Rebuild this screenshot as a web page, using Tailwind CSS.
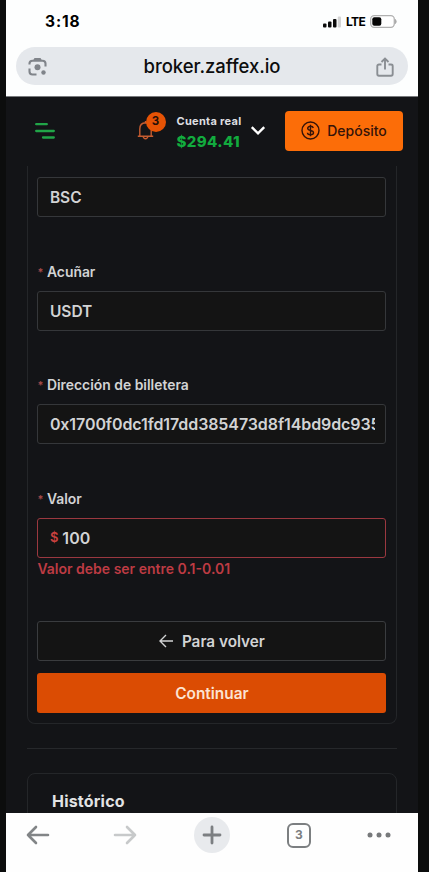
<!DOCTYPE html>
<html lang="es">
<head>
<meta charset="utf-8">
<title>Zaffex</title>
<script src="https://cdn.jsdelivr.net/npm/@tailwindcss/browser@4"></script>
</head>
<body class="bg-[#0c0d0d] font-['Inter','Liberation_Sans',sans-serif]">
<div class="ml-[6px] flex h-[872px] w-[412px] flex-col overflow-hidden bg-[#131417]">
  <div class="h-[97px] shrink-0 border-b border-[#77797c] bg-[#fdfefe]">
    <div class="flex h-[47px] items-center pr-[21px] pb-[4px] pl-[39px]">
      <span class="text-[15.5px] leading-5 font-bold tracking-[0.9px] text-black">3:18</span>
      <svg class="ml-auto" width="18" height="12" viewBox="0 0 18 12"><g fill="#0b0b0b"><rect x="0" y="7.500" width="3.500" height="4" rx="1"/><rect x="5" y="5.500" width="3.500" height="6" rx="1"/><rect x="10" y="3" width="3.500" height="8.500" rx="1"/></g><rect x="14.800" y="0.500" width="3.200" height="11" rx="1" fill="#d4d4d4"/></svg>
      <span class="ml-[5px] pt-px text-[12px] leading-5 font-bold tracking-[-0.7px] text-black">LTE</span>
      <svg class="ml-[5px]" width="27" height="13" viewBox="0 0 27 13"><rect x=".7" y=".7" width="23.600" height="11.600" rx="3.500" fill="#fff" stroke="#b0b0b0" stroke-width="1.300"/><rect x="2.300" y="2.200" width="9" height="8.600" rx="2" fill="#050505"/><path d="M25.500 4.500q1.400 2 0 4z" fill="#aaa" stroke="#aaa"/></svg>
    </div>
    <div class="mx-[10px] flex h-[38px] items-center justify-between rounded-full bg-[#e5e8ec] pr-[14px] pl-[12px]">
      <svg width="19" height="19" viewBox="0 0 19 19" fill="none" stroke="#80848a" stroke-width="2.100"><path d="M1.500 7.500V6.500Q1.500 3.700 4.500 3.700h10Q17.500 3.700 17.500 6.500V9.500M1.500 11.500V14.500q0 3 3 3H8.500"/><path d="M5 3.500 6.500 1h6L14 3.500z" fill="#80848a" stroke="none"/><circle cx="9.500" cy="10.300" r="3" fill="#80848a" stroke="none"/><circle cx="15.500" cy="15.500" r="2.200" fill="#80848a" stroke="none"/></svg>
      <span class="ml-px text-[18.500px] leading-6 font-[550] tracking-[-0.05px] text-[#0c0d0e]">broker.zaffex.io</span>
      <svg class="mt-px" width="18" height="20" viewBox="0 0 18 20" fill="none" stroke="#8a8e93" stroke-width="1.900"><path d="M5.500 7.500H3Q1.300 7.500 1.300 9v8Q1.300 18.700 3 18.700h12q1.700 0 1.700-1.700V9q0-1.500-1.700-1.500h-2.500M9 12.500V1.700M5.500 5 9 1.500 12.500 5"/></svg>
    </div>
  </div>

  <div class="flex h-[69px] shrink-0 items-center pr-[15px] pb-px pl-[29px]">
    <svg width="20" height="16" viewBox="0 0 20 16" stroke="#21a548" stroke-width="2.300" stroke-linecap="round"><path d="M1.200 1.200h10.600M1.200 8h17.600M8 14.500h10.800"/></svg>
    <div class="relative ml-[81.500px] h-[32px] w-[30px]">
      <svg class="mt-[5px]" width="18" height="20" viewBox="0 0 18 20" fill="none" stroke="#c65c30" stroke-width="1.400"><path d="M2.800 16V9q0-6.200 5.700-6.300Q14.200 2.800 14.200 9v7M.8 16.300h15.400M6.200 16.500q.3 2.200 2.300 2.200t2.300-2.200M8.500 2.700V1"/></svg>
      <span class="absolute -top-[3px] left-[9px] flex h-[20px] w-[20px] items-center justify-center rounded-full bg-[#e65305] text-[11.500px] font-bold text-[#260f08]">3</span>
    </div>
    <div class="ml-[10px] flex w-[66px] flex-col pt-[3px] whitespace-nowrap">
      <span class="text-[11px] leading-[18px] font-bold tracking-[0.3px] text-[#dedfe1]">Cuenta real</span>
      <span class="text-[15px] leading-[23px] font-extrabold tracking-[0.4px] text-[#12ab3e]">$294.41</span>
    </div>
    <svg class="ml-[7.500px]" width="16" height="10" viewBox="0 0 16 10" fill="none" stroke="#fff" stroke-width="2.400"><path d="M1.800 1.200 8 7.400 14.200 1.200"/></svg>
    <div class="ml-auto flex h-[40px] w-[118px] items-center justify-center gap-[7px] rounded-[4px] bg-[#fc6d08] text-[#351309]">
      <svg class="-mt-px" width="19" height="19" viewBox="0 0 19 19" fill="none" stroke="currentColor" stroke-width="1.400"><circle cx="9.500" cy="9.500" r="8.500"/><path d="M12.300 7q-.4-1.800-2.800-1.800T6.700 7.200q0 1.700 2.800 2.200 3 .5 3 2.400 0 2-3 2t-3-2M9.500 3.800v11.400"/></svg>
      <span class="text-[14px] leading-5 font-medium">Depósito</span>
    </div>
  </div>

  <div class="flex h-[647px] shrink-0 flex-col overflow-hidden px-[21px]">
    <div class="h-[557.500px] shrink-0 rounded-b-[8px] border border-t-0 border-[#242629] pt-[11px] pr-[9.600px] pl-[9.400px] text-[#d2d3d4]">
      <div class="flex h-[40px] items-center rounded-[3px] border border-[#35373a] bg-[#141414] px-[11.500px] pt-px text-[15.500px] font-[580]">BSC</div>
      <div class="mt-[45px] mb-[8.500px] flex h-[20px] items-center text-[13.900px] font-[570]"><span class="w-[9.500px] text-[11px] text-[#a54a48]">*</span>Acuñar</div>
      <div class="flex h-[40px] items-center rounded-[3px] border border-[#35373a] bg-[#141414] px-[11.500px] pt-[2px] text-[15.500px] font-[580]">USDT</div>
      <div class="mt-[45px] mb-[8.500px] flex h-[20px] items-center text-[13.900px] font-[570]"><span class="w-[9.500px] text-[11px] text-[#a54a48]">*</span>Dirección de billetera</div>
      <div class="flex h-[40px] items-center rounded-[3px] border border-[#35373a] bg-[#141414] pr-[10.500px] pl-[11.500px] text-[16px] font-[580]"><span class="overflow-hidden tracking-[-0.09px] whitespace-nowrap">0x1700f0dc1fd17dd385473d8f14bd9dc935</span></div>
      <div class="mt-[45px] mb-[8.500px] flex h-[20px] items-center text-[13.900px] font-[570]"><span class="w-[9.500px] text-[11px] text-[#a54a48]">*</span>Valor</div>
      <div class="flex h-[40px] items-center rounded-[3px] border border-[#9b3840] bg-[#141414] px-[11.500px] text-[16px] font-[580]"><span class="mr-[4px] pt-px text-[13px] text-[#c9413f]">$</span>100</div>
      <div class="mt-[1px] h-[20px] text-[14px] leading-[20px] font-[570] text-[#bd3b43]">Valor debe ser entre 0.1-0.01</div>
      <div class="mt-[42.500px] flex h-[40px] items-center justify-center gap-[9px] rounded-[3px] border border-[#3a3c3f] bg-[#141414] pt-[2px] text-[15.300px] font-[580]">
        <svg class="-mt-[2px]" width="14" height="14" viewBox="0 0 14 14" fill="none" stroke="currentColor" stroke-width="1.400"><path d="M14 7H1.200M7 1 1 7l6 6"/></svg>Para volver
      </div>
      <div class="mt-[12px] flex h-[40px] items-center justify-center rounded-[3px] bg-[#db4c03] pt-[2px] text-[15.400px] font-[580] text-[#fbe3d2]">Continuar</div>
    </div>
    <div class="mt-[24px] h-px shrink-0 bg-[#26282b]"></div>
    <div class="mt-[24px] h-[80px] shrink-0 rounded-t-[8px] border border-[#242629] pt-[16px] pl-[24px] text-[16px] leading-[22px] font-bold tracking-[0.2px] text-[#e2e3e4]">Histórico</div>
  </div>

  <div class="flex h-[59px] shrink-0 items-start bg-[#fefefe] pt-[4px] pl-[20px]">
    <svg class="mt-[8px]" width="24" height="20" viewBox="0 0 24 20" fill="none" stroke="#828587" stroke-width="2.600" stroke-linecap="round" stroke-linejoin="round"><path d="M22 10H2M10 2 2 10l8 8"/></svg>
    <svg class="mt-[8px] ml-[63px]" width="24" height="20" viewBox="0 0 24 20" fill="none" stroke="#c7c9ca" stroke-width="2.600" stroke-linecap="round" stroke-linejoin="round"><path d="M2 10h20M14 2l8 8-8 8"/></svg>
    <div class="ml-[57px] flex h-[36px] w-[36px] items-center justify-center rounded-full bg-[#e8eaed]"><svg width="20" height="20" viewBox="0 0 20 20" stroke="#7c7f82" stroke-width="2.800" stroke-linecap="round"><path d="M10 2v16M2 10h16"/></svg></div>
    <div class="mt-[6px] ml-[56.500px] flex h-[24.500px] w-[24.500px] items-center justify-center rounded-[6px] border-2 border-[#7c7f81] text-[12px] font-bold text-[#7c7f81]">3</div>
    <svg class="mt-[15px] ml-[56px]" width="24" height="6" viewBox="0 0 24 6" fill="#77797b"><circle cx="3" cy="3" r="2.500"/><circle cx="12" cy="3" r="2.500"/><circle cx="21" cy="3" r="2.500"/></svg>
  </div>
</div>
</body>
</html>
